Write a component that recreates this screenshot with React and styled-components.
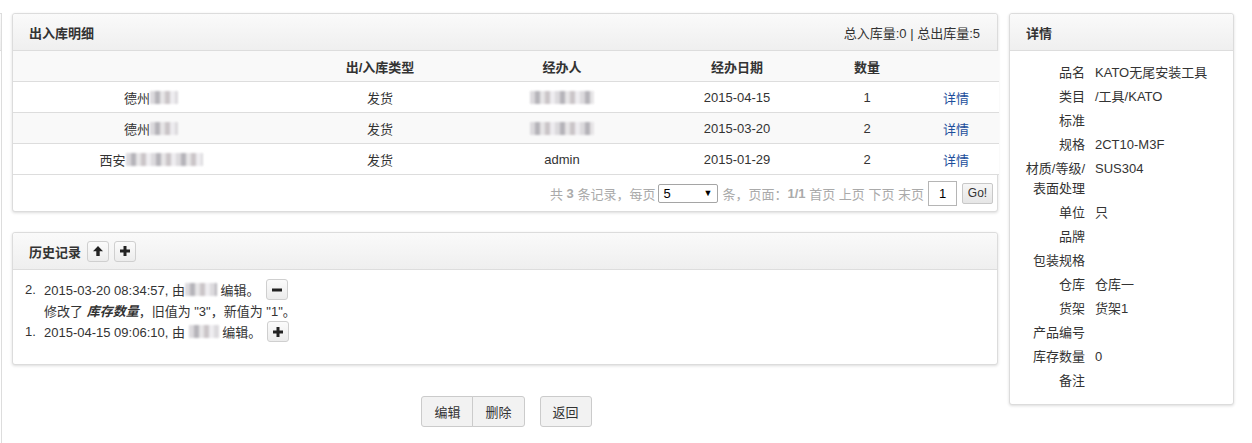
import React from 'react';
import styled, { createGlobalStyle } from 'styled-components';

const GlobalStyle = createGlobalStyle`
    body {
        margin: 0;
        background: #fff;
        font-family: "Liberation Sans", Arial, "Noto Sans CJK SC", sans-serif;
        font-size: 13px;
        color: #333;
    }
`;

const Page = styled.div`
    display: flex;
    align-items: flex-start;
    padding-top: 13px;
    height: 430px;
    overflow: hidden;
`;

const Stub = styled.div`
    width: 2px;
    height: 430px;
    border-right: 1px solid #ddd;
    border-top: 1px solid #ddd;
    box-sizing: border-box;
    flex-shrink: 0;
`;

const StubHead = styled.div`
    height: 36px;
    border-bottom: 1px solid #ddd;
    background: linear-gradient(#fafafa, #eeeeee);
`;

const MainCol = styled.div`
    width: 986px;
    margin-left: 10px;
    flex-shrink: 0;
`;

const Panel = styled.section`
    border: 1px solid #dcdcdc;
    border-radius: 3px;
    box-shadow: 0 1px 3px rgba(0, 0, 0, 0.14);
    background: #fff;
    margin-top: ${p => p.$gap || 0}px;
    box-sizing: border-box;
`;

const PanelHead = styled.div`
    height: 36px;
    display: flex;
    align-items: center;
    gap: 5px;
    padding: 0 17px 0 16px;
    border-bottom: 1px solid #ddd;
    background: linear-gradient(#fafafa, #efefef);
    border-radius: 3px 3px 0 0;
`;

const PanelTitle = styled.h3`
    margin: 0 1px 0 0;
    font-size: 13px;
    font-weight: bold;
    color: #333;
`;

const HeadRight = styled.div`
    margin-left: auto;
    color: #333;
`;

const Grid = styled.div`
    display: grid;
    grid-template-columns: 276px 182px 182px 168px 92px 86px;
`;

const Row = styled.div`
    display: contents;
    & > div {
        height: 30px;
        border-bottom: 1px solid #ddd;
        background: ${p => (p.$alt ? '#f9f9f9' : '#fff')};
        display: flex;
        align-items: center;
        justify-content: center;
        font-weight: ${p => (p.$head ? 'bold' : 'normal')};
    }
`;

const Cell = styled.div``;

const Link = styled.a`
    color: #1d4f9c;
    text-decoration: none;
    cursor: pointer;
`;

const Blur = styled.span`
    display: inline-block;
    width: ${p => p.$w}px;
    height: 13px;
    vertical-align: -2px;
    background: repeating-linear-gradient(90deg, #d6d4d8 0 5px, #a9a7ae 5px 10px, #e3e1e3 10px 15px, #c2bcbf 15px 20px, #eceaee 20px 25px);
    filter: blur(0.8px);
    opacity: 0.85;
`;

const Pager = styled.div`
    height: 36px;
    display: flex;
    align-items: center;
    justify-content: flex-end;
    padding-right: 4px;
    color: #aaa;
    white-space: pre;
`;

const Strong = styled.b`
    font-weight: bold;
`;

const SelectWrap = styled.span`
    position: relative;
    display: inline-block;
    margin: 0 4px 0 3px;
`;

const Select = styled.select`
    appearance: none;
    width: 60px;
    height: 19px;
    border: 1px solid #a5a5a5;
    border-radius: 2px;
    background: #fff;
    font: inherit;
    font-size: 13px;
    color: #000;
    padding: 0 0 0 4px;
    box-sizing: border-box;
`;

const Caret = styled.span`
    position: absolute;
    right: 6px;
    top: 4px;
    font-size: 9px;
    color: #000;
    pointer-events: none;
`;

const PageInput = styled.input`
    width: 29px;
    height: 25px;
    box-sizing: border-box;
    border: 1px solid #b5b5b5;
    text-align: center;
    font: inherit;
    font-size: 13px;
    color: #000;
    margin-left: 4px;
    padding: 0;
`;

const GoBtn = styled.button`
    height: 21px;
    width: 31px;
    margin-left: 5px;
    padding: 0;
    border: 1px solid #c8c8c8;
    border-radius: 2px;
    background: linear-gradient(#f6f6f6, #e6e6e6);
    font: inherit;
    font-size: 12px;
    color: #333;
`;

const IconBtn = styled.button`
    width: 22px;
    height: 21px;
    padding: 0;
    margin-left: ${p => p.$ml || 0}px;
    border: 1px solid #cfcfcf;
    border-radius: 3px;
    background: linear-gradient(#fbfbfb, #ececec);
    display: inline-flex;
    align-items: center;
    justify-content: center;
    flex-shrink: 0;
`;

const HistBody = styled.div`
    padding: 9px 0 22px;
`;

const HistLine = styled.div`
    height: 21px;
    display: flex;
    align-items: center;
    padding-left: ${p => (p.$indent ? 31 : 12)}px;
    white-space: pre;
`;

const Marker = styled.span`
    width: 19px;
`;

const Em = styled.b`
    font-style: italic;
    font-weight: bold;
`;

const Actions = styled.div`
    display: flex;
    justify-content: center;
    gap: 15px;
    margin-top: 31px;
    padding-left: 3px;
`;

const BtnGroup = styled.div`
    display: flex;
    & > button + button {
        margin-left: -1px;
        border-radius: 0 3px 3px 0;
    }
    & > button:first-child {
        border-radius: 3px 0 0 3px;
    }
`;

const Btn = styled.button`
    height: 31px;
    padding: 0 12px;
    border: 1px solid #cbcbcb;
    border-radius: 3px;
    background: #f2f2f2;
    font: inherit;
    font-size: 13px;
    color: #333;
`;

const SidePanel = styled(Panel)`
    width: 225px;
    margin-left: 11px;
    flex-shrink: 0;
`;

const DetailBody = styled.dl`
    margin: 0;
    padding: 10px 0 11px 10px;
    display: grid;
    grid-template-columns: 65px 1fr;
    column-gap: 10px;
`;

const Dt = styled.dt`
    text-align: right;
    line-height: 20px;
    padding: 2px 0;
`;

const Dd = styled.dd`
    margin: 0;
    line-height: 20px;
    padding: 2px 0;
`;

const Up = () => (
    <svg width="12" height="12" viewBox="0 0 12 12">
        <path d="M6 1 L11 6.2 H7.7 V11 H4.3 V6.2 H1 Z" fill="#222" />
    </svg>
);

const Plus = () => (
    <svg width="12" height="12" viewBox="0 0 12 12">
        <path d="M4.5 1 H7.5 V4.5 H11 V7.5 H7.5 V11 H4.5 V7.5 H1 V4.5 H4.5 Z" fill="#222" />
    </svg>
);

const Minus = () => (
    <svg width="12" height="12" viewBox="0 0 12 12">
        <rect x="1" y="4.5" width="10" height="3" fill="#222" />
    </svg>
);

const rows = [
    { place: '德州', bw: 28, name: 64, date: '2015-04-15', qty: 1 },
    { place: '德州', bw: 28, name: 64, date: '2015-03-20', qty: 2 },
    { place: '西安', bw: 77, name: null, date: '2015-01-29', qty: 2 },
];

const details = [
    ['品名', 'KATO无尾安装工具'],
    ['类目', '/工具/KATO'],
    ['标准', ''],
    ['规格', '2CT10-M3F'],
    ['材质/等级/表面处理', 'SUS304'],
    ['单位', '只'],
    ['品牌', ''],
    ['包装规格', ''],
    ['仓库', '仓库一'],
    ['货架', '货架1'],
    ['产品编号', ''],
    ['库存数量', '0'],
    ['备注', ''],
];

export default function App() {
    return (
        <>
            <GlobalStyle />
            <Page>
                <Stub>
                    <StubHead />
                </Stub>
                <MainCol>
                    <Panel>
                        <PanelHead>
                            <PanelTitle>出入库明细</PanelTitle>
                            <HeadRight>总入库量:0 | 总出库量:5</HeadRight>
                        </PanelHead>
                        <Grid>
                            <Row $head $alt>
                                <Cell></Cell>
                                <Cell>出/入库类型</Cell>
                                <Cell>经办人</Cell>
                                <Cell>经办日期</Cell>
                                <Cell>数量</Cell>
                                <Cell></Cell>
                            </Row>
                            {rows.map((r, i) => (
                                <Row key={i} $alt={i === 1}>
                                    <Cell>
                                        {r.place}
                                        <Blur $w={r.bw} />
                                    </Cell>
                                    <Cell>发货</Cell>
                                    <Cell>{r.name ? <Blur $w={r.name} /> : 'admin'}</Cell>
                                    <Cell>{r.date}</Cell>
                                    <Cell>{r.qty}</Cell>
                                    <Cell>
                                        <Link>详情</Link>
                                    </Cell>
                                </Row>
                            ))}
                        </Grid>
                        <Pager>
                            共 <Strong>3</Strong> 条记录，每页
                            <SelectWrap>
                                <Select defaultValue="5">
                                    <option value="5">5</option>
                                    <option value="10">10</option>
                                </Select>
                                <Caret>▼</Caret>
                            </SelectWrap>
                            条，页面：<Strong>1/1</Strong> 首页 上页 下页 末页
                            <PageInput defaultValue="1" />
                            <GoBtn>Go!</GoBtn>
                        </Pager>
                    </Panel>

                    <Panel $gap={20}>
                        <PanelHead>
                            <PanelTitle>历史记录</PanelTitle>
                            <IconBtn>
                                <Up />
                            </IconBtn>
                            <IconBtn>
                                <Plus />
                            </IconBtn>
                        </PanelHead>
                        <HistBody>
                            <HistLine>
                                <Marker>2.</Marker>
                                2015-03-20 08:34:57, 由<Blur $w={32} /> 编辑。
                                <IconBtn $ml={6}>
                                    <Minus />
                                </IconBtn>
                            </HistLine>
                            <HistLine $indent>
                                修改了 <Em>库存数量</Em>，旧值为 "3"，新值为 "1"。
                            </HistLine>
                            <HistLine>
                                <Marker>1.</Marker>
                                2015-04-15 09:06:10, 由 <Blur $w={30} /> 编辑。
                                <IconBtn $ml={6}>
                                    <Plus />
                                </IconBtn>
                            </HistLine>
                        </HistBody>
                    </Panel>

                    <Actions>
                        <BtnGroup>
                            <Btn>编辑</Btn>
                            <Btn>删除</Btn>
                        </BtnGroup>
                        <Btn>返回</Btn>
                    </Actions>
                </MainCol>

                <SidePanel>
                    <PanelHead>
                        <PanelTitle>详情</PanelTitle>
                    </PanelHead>
                    <DetailBody>
                        {details.map(([k, v]) => (
                            <React.Fragment key={k}>
                                <Dt>{k}</Dt>
                                <Dd>{v}</Dd>
                            </React.Fragment>
                        ))}
                    </DetailBody>
                </SidePanel>
            </Page>
        </>
    );
}
